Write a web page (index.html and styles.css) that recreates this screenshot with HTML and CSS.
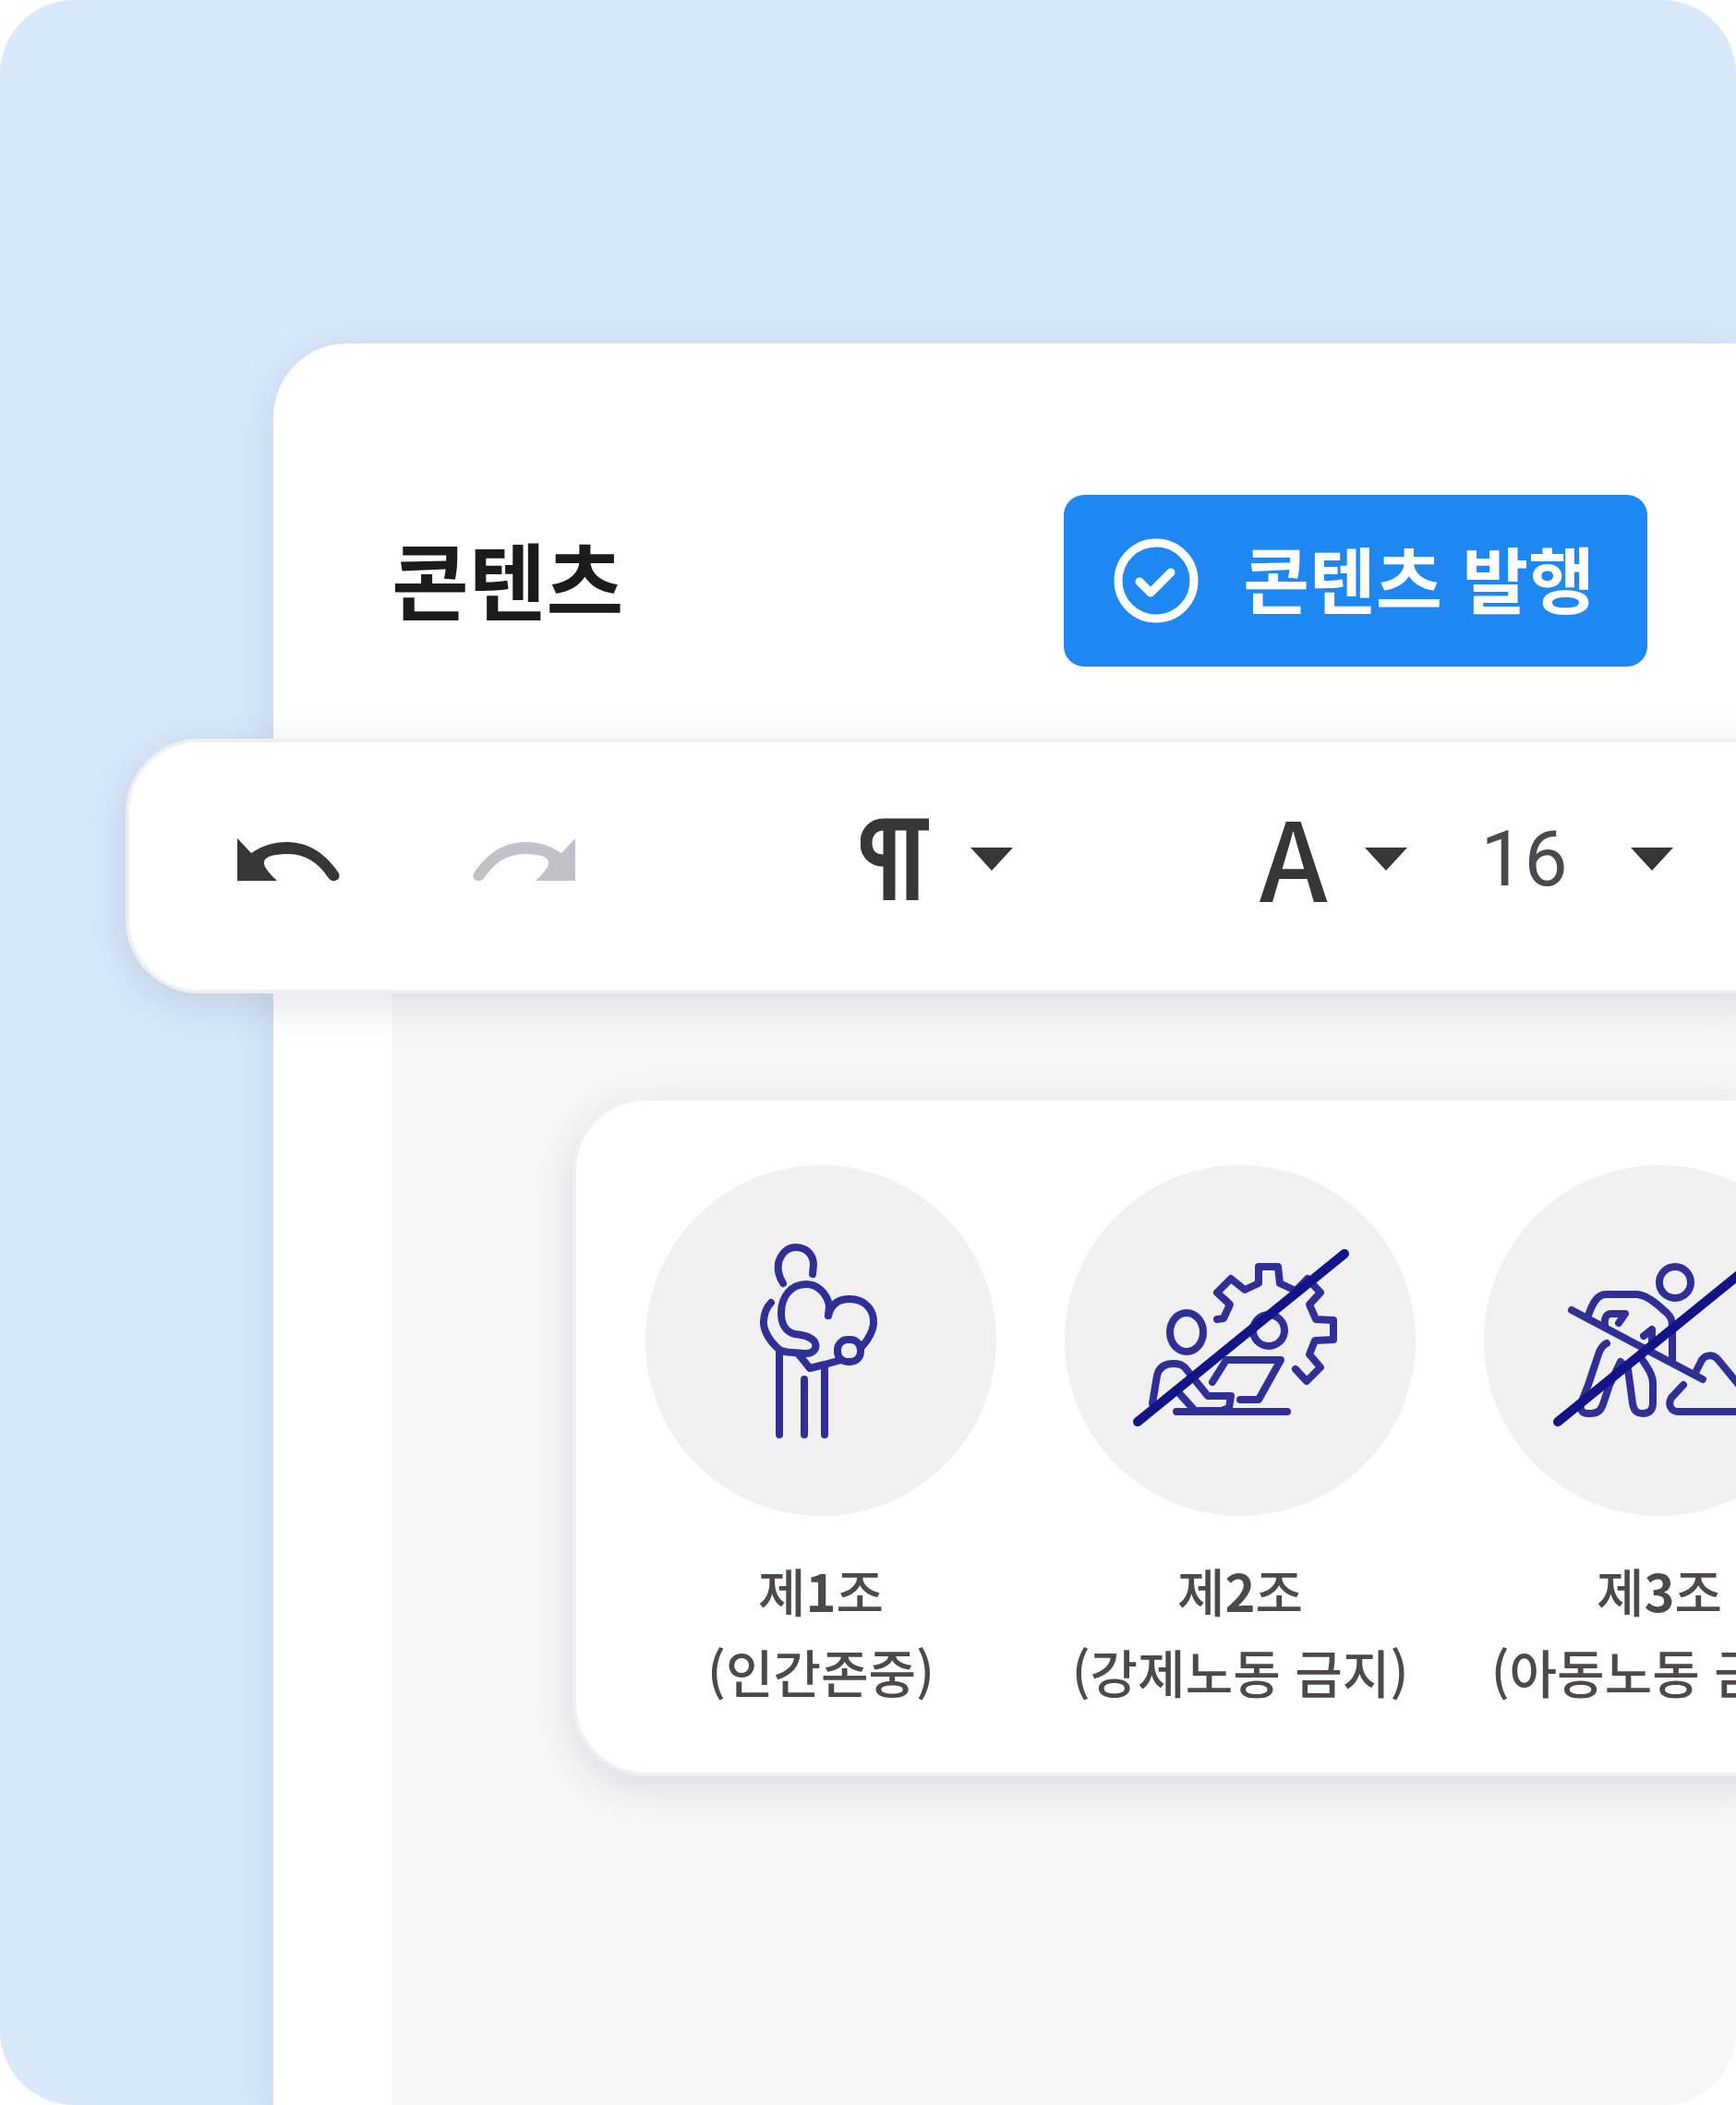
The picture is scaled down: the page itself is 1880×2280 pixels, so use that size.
FILE: index.html
```html
<!DOCTYPE html>
<html lang="ko">
<head>
  <meta charset="UTF-8">
  <meta name="viewport" content="width=device-width, initial-scale=1.0">
  <title>콘텐츠</title>
  <link rel="stylesheet" href="styles.css">
</head>
<body>

  <div class="stage">
    <main class="panel">

      <header class="panel-header">
        <h1>콘텐츠</h1>
        <button type="button" class="publish">
          <svg class="publish-icon" viewBox="0 0 92 92" aria-hidden="true">
            <circle cx="46" cy="46" r="41"/>
            <path d="M28 47l12 12 22-22"/>
          </svg>
          <span>콘텐츠 발행</span>
        </button>
      </header>

      <div class="toolbar" role="toolbar" aria-label="편집 도구">
        <div class="history">
          <button type="button" class="tool" aria-label="실행 취소">
            <svg class="arrow" viewBox="0 -6 112 54" aria-hidden="true">
              <path d="M1 -1L16 15C28 7 40 3 55 3C79 3 98 17 111 37Q113 43 107 45Q102 46 99 41C88 25 74 16 57 16C42 16 32 18 30 24C29 30 36 37 44 45H1Z"/>
            </svg>
          </button>
          <button type="button" class="tool" aria-label="다시 실행" disabled>
            <svg class="arrow" viewBox="0 -6 112 54" aria-hidden="true">
              <path d="M111 -1L96 15C84 7 72 3 57 3C33 3 14 17 1 37Q-1 43 5 45Q10 46 13 41C24 25 38 16 55 16C70 16 80 18 82 24C83 30 76 37 68 45H111Z"/>
            </svg>
          </button>
        </div>

        <button type="button" class="tool paragraph" aria-label="단락 서식">
          <svg class="pilcrow" viewBox="0 0 74 90" aria-hidden="true">
            <path d="M74 8H25C13 8 6 17 6 28C6 39 13 47 25 47H31M31 8V90M56 8V90"/>
          </svg>
          <svg class="caret" viewBox="0 0 48 26" aria-hidden="true"><path d="M1 1H47L24 26Z"/></svg>
        </button>

        <div class="font-tools">
          <button type="button" class="tool" aria-label="글꼴">
            <span class="letter">A</span>
            <svg class="caret" viewBox="0 0 48 26" aria-hidden="true"><path d="M1 1H47L24 26Z"/></svg>
          </button>
          <div class="font-size">
            <select aria-label="글자 크기">
              <option>12</option>
              <option>14</option>
              <option selected>16</option>
              <option>18</option>
            </select>
            <svg class="caret" viewBox="0 0 48 26" aria-hidden="true"><path d="M1 1H47L24 26Z"/></svg>
          </div>
        </div>
      </div>

      <section class="canvas">
        <ul class="card">
          <li class="article">
            <svg class="picto" viewBox="0 0 380 380" aria-hidden="true">
              <path d="M149 128C144 120 143 112 144 106C147 95 154 89 163 89C174 89 182 97 182 108L181 118"/>
              <path d="M198 163L199 152C196 138 186 129 174 129C158 129 147 142 147 160C147 172 152 181 162 183C170 184 178 185 183 191C187 198 182 205 172 204L160 203C152 203 147 202 143 198C132 188 127 176 128 168C129 158 132 153 136 149"/>
              <path d="M198 163C201 150 210 145 221 145C238 145 248 157 247 172C246 182 241 189 235 196"/>
              <rect x="208" y="189" width="25" height="24" rx="11"/>
              <path d="M212 211L194 216L178 220L166 205"/>
              <path d="M145 202V292M172 232V292M194 216V292"/>
            </svg>
            <p>제<b>1</b>조<br>(인간존중)</p>
          </li>
          <li class="article">
            <svg class="picto" viewBox="0 0 380 380" aria-hidden="true">
              <ellipse cx="132" cy="181" rx="18" ry="21"/>
              <path d="M165 167L172 166L179 151L165 138L180 123L195 135L210 128V110H231L233 128L250 136L263 123L277 138L265 151L272 167L291 168V189L271 190L265 205L277 219L262 234L250 221"/>
              <circle cx="221" cy="179" r="17"/>
              <path d="M160 235L175 211H234L210 254H190"/>
              <path d="M95 258L100 228C102 219 108 215 118 215C124 215 127 216 130 219L155 250H180L178 263L170 266H141L123 246"/>
              <path d="M121 267H241"/>
              <path class="slash" d="M79 278L303 96"/>
            </svg>
            <p>제<b>2</b>조<br>(강제노동 금지)</p>
          </li>
          <li class="article">
            <svg class="picto" viewBox="0 0 380 380" aria-hidden="true">
              <circle cx="207" cy="127" r="17"/>
              <path d="M95 157L237 232"/>
              <path d="M113 163C117 151 122 140 132 140H166C178 141 190 153 198 160C202 164 204 167 204 174V211"/>
              <path d="M131 173C130 165 133 161 138 161H153L146 171M173 185L182 178V191"/>
              <path d="M133 193C128 195 126 199 124 205L113 238L106 256C103 264 106 269 112 269H117C124 269 127 265 129 259L136 238L148 213L156 221L161 258C162 265 165 269 172 269C179 269 183 265 183 258V236C183 227 177 219 171 210"/>
              <path d="M216 238L203 252C199 259 202 267 211 267H300L253 210C248 205 240 205 236 211L229 225"/>
              <path class="slash" d="M80 278L304 96"/>
            </svg>
            <p>제<b>3</b>조<br>(아동노동 금지)</p>
          </li>
        </ul>
      </section>

    </main>
  </div>

</body>
</html>
```
FILE: styles.css
```css
* {
  box-sizing: border-box;
}
body {
  margin: 0;
  background-color: #fff;
  font-family: "Noto Sans CJK KR", sans-serif;
  color: #1b1b1b;
}
button, select {
  border: 0;
  padding: 0;
  background: none;
  color: inherit;
  font-family: inherit;
}
.stage {
  display: flex;
  min-height: 100vh;
  padding: 372px 0 0 296px;
  border-radius: 80px;
  background-color: #d9e8fb;
  overflow: hidden;
}
.panel {
  flex: 1;
  min-width: 0;
  display: flex;
  flex-direction: column;
  border-top-left-radius: 80px;
  background-color: #fff;
  box-shadow: 0 12px 48px rgba(20, 20, 50, 0.1);
}

/* header */
.panel-header {
  display: flex;
  justify-content: space-between;
  align-items: center;
  padding: 164px 96px 78px 128px;
}
h1 {
  margin: 0;
  padding-bottom: 8px;
  font-size: 91px;
  line-height: 132px;
}
.publish {
  display: flex;
  align-items: center;
  gap: 48px;
  height: 186px;
  padding: 0 57px 0 54px;
  border-radius: 22px;
  background-color: #1f87f1;
  color: #fff;
  font-size: 78px;
  font-weight: bold;
  line-height: 112px;
  white-space: nowrap;
}
.publish span {
  padding-bottom: 8px;
}
.publish-icon {
  width: 92px;
  height: 92px;
  fill: none;
  stroke: #fff;
  stroke-width: 9;
  stroke-linecap: round;
  stroke-linejoin: round;
}

/* toolbar, hangs over the left edge of the panel */
.toolbar {
  position: relative;
  z-index: 1;
  display: flex;
  align-items: center;
  height: 276px;
  margin: 0 -80px 0 -160px;
  padding: 0 0 16px 116px;
  border: 4px solid #f0f0f0;
  border-radius: 80px;
  background-color: #fff;
  box-shadow: 0 12px 48px rgba(20, 20, 50, 0.12);
  color: #363636;
}
.history {
  display: flex;
  gap: 144px;
}
.paragraph {
  margin-left: 308px;
}
.font-tools {
  display: flex;
  align-items: center;
  gap: 78px;
  margin-left: 266px;
}
.tool {
  display: flex;
  align-items: center;
  gap: 44px;
}
.tool:disabled {
  color: #c2c1c9;
}
.arrow {
  width: 112px;
  height: 54px;
  fill: currentColor;
}
.pilcrow {
  width: 74px;
  height: 90px;
  fill: none;
  stroke: currentColor;
  stroke-width: 13;
}
.caret {
  width: 48px;
  height: 26px;
  fill: currentColor;
}
.letter {
  padding-bottom: 8px;
  font-size: 118px;
  font-weight: 500;
  line-height: 120px;
}
.font-tools .tool {
  gap: 40px;
}
.font-size {
  display: grid;
  align-items: center;
  width: 210px;
}
.font-size select, .font-size .caret {
  grid-area: 1 / 1;
}
.font-size select {
  appearance: none;
  width: 100%;
  color: #4a4a4e;
  font-family: Roboto, Arial, sans-serif;
  font-size: 84px;
}
.font-size .caret {
  justify-self: end;
  pointer-events: none;
}

/* content */
.canvas {
  flex: 1;
  margin-left: 128px;
  padding: 112px 0 112px 196px;
  background-color: #f7f7f7;
}
.card {
  display: flex;
  gap: 74px;
  margin: 0 -80px 0 0;
  padding: 70px 0 66px 75px;
  border: 4px solid #f0f0f0;
  border-radius: 80px;
  background-color: #fff;
  box-shadow: 0 12px 48px rgba(20, 20, 50, 0.12);
  list-style: none;
}
.article {
  flex: none;
  width: 380px;
  color: #4d484c;
  font-size: 56px;
  font-weight: 500;
  line-height: 88px;
  text-align: center;
  white-space: nowrap;
}
.article p {
  margin: 36px 0 0;
}
.picto {
  display: block;
  width: 380px;
  height: 380px;
  border-radius: 50%;
  background-color: #f0f0f0;
  fill: none;
  stroke: #2f2f96;
  stroke-width: 8;
  stroke-linecap: round;
  stroke-linejoin: round;
}
.slash {
  stroke: #141489;
  stroke-width: 10;
}
```
